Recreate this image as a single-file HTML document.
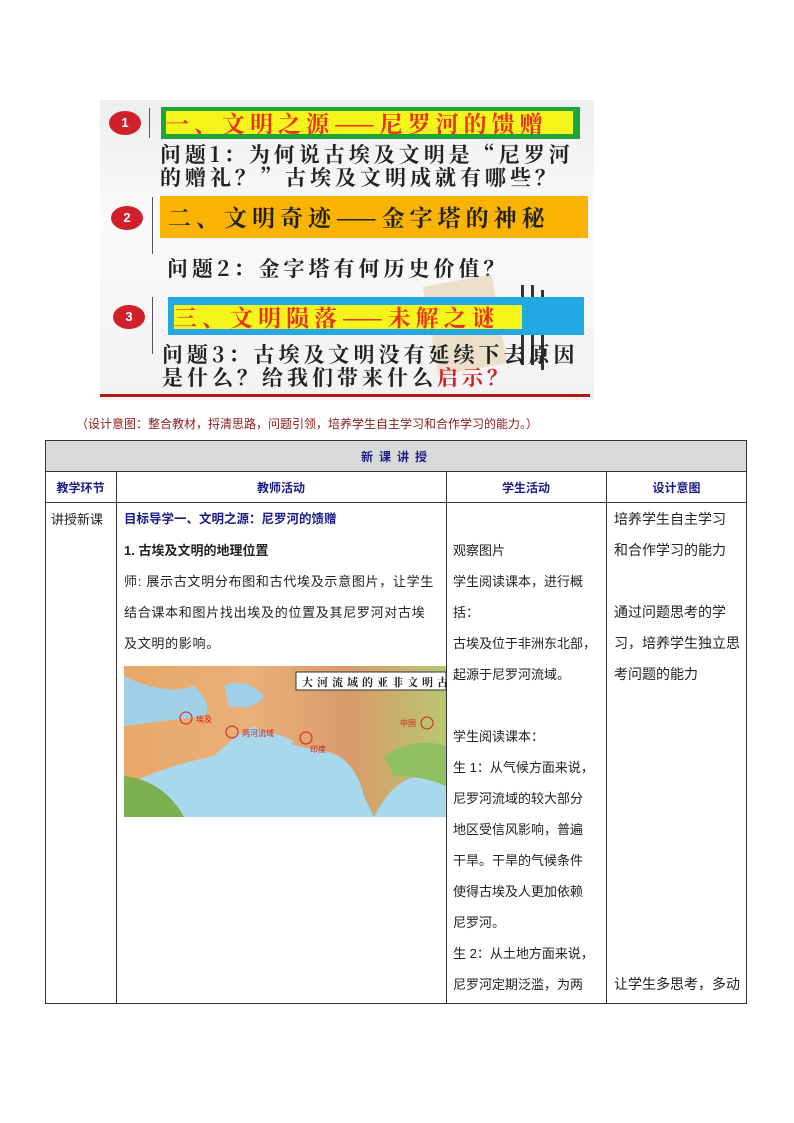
<!DOCTYPE html>
<html><head><meta charset="utf-8"><style>
body{margin:0;background:#fff;width:794px;height:1123px;position:relative;overflow:hidden;font-family:"Liberation Sans","Noto Sans CJK SC",sans-serif;}
.a{position:absolute;white-space:nowrap;}
.slide{position:absolute;left:100px;top:100px;width:494px;height:300px;background:linear-gradient(#eceef0,#fafafa 40%,#f2f2f2);overflow:hidden;font-family:"Noto Serif CJK SC","Noto Sans CJK SC",serif;font-weight:bold;}
.dot{position:absolute;width:32px;height:24px;border-radius:50%;background:#d0202a;color:#fff;font-size:13px;text-align:center;line-height:24px;font-family:"Liberation Sans",sans-serif;}
.vl{position:absolute;width:1px;background:#555;}
.q{position:absolute;font-size:21px;letter-spacing:4px;color:#222;white-space:nowrap;line-height:23px;}
.h{font-size:23px;letter-spacing:5px;white-space:nowrap;overflow:hidden;position:absolute;}
.t{position:absolute;font-size:13px;line-height:31px;color:#222;}
.cell{position:absolute;border:1px solid #333;box-sizing:border-box;}
</style></head><body>
<div class="slide">
 <div class="dot" style="left:9px;top:11px">1</div>
 <div class="dot" style="left:11px;top:106px">2</div>
 <div class="dot" style="left:13px;top:205px">3</div>
 <div class="vl" style="left:49px;top:8px;height:30px"></div>
 <div class="vl" style="left:52px;top:97px;height:57px"></div>
 <div class="vl" style="left:52px;top:197px;height:57px"></div>
 <div style="position:absolute;left:61px;top:7px;width:419px;height:32px;background:#1fa33a"></div>
 <div class="h" style="left:66px;top:11px;width:407px;height:23px;background:#f5f51c;color:#e8321b;line-height:23px">一、文明之源——尼罗河的馈赠</div>
 <div class="q" style="left:60px;top:43px">问题1：为何说古埃及文明是“尼罗河<br>的赠礼？”古埃及文明成就有哪些？</div>
 <div class="h" style="left:60px;top:96px;width:428px;height:42px;background:#f9b300;color:#222;line-height:42px;padding-left:8px;box-sizing:border-box">二、文明奇迹——金字塔的神秘</div>
 <div class="q" style="left:67px;top:157px">问题2：金字塔有何历史价值？</div>
 <div style="position:absolute;left:330px;top:180px;width:70px;height:90px;background:#e8d6b6;transform:rotate(-10deg);opacity:.7"></div>
 <div style="position:absolute;left:421px;top:185px;width:3px;height:80px;background:#333"></div>
 <div style="position:absolute;left:431px;top:185px;width:3px;height:80px;background:#333"></div>
 <div style="position:absolute;left:441px;top:190px;width:3px;height:80px;background:#333"></div>
 <div style="position:absolute;left:68px;top:197px;width:416px;height:38px;background:#24a8e4"></div>
 <div class="h" style="left:74px;top:205px;width:348px;height:24px;background:#f5f51c;color:#e8321b;line-height:24px">三、文明陨落——未解之谜</div>
 <div class="q" style="left:62px;top:243px">问题3：古埃及文明没有延续下去原因<br>是什么？给我们带来什么<span style="color:#d0202a">启示？</span></div>
 <div style="position:absolute;left:0;top:294px;width:490px;height:3px;background:#b01818"></div>
</div>
<div class="a" style="left:76px;top:415px;font-size:12px;color:#8b1a1a">（设计意图：整合教材，捋清思路，问题引领，培养学生自主学习和合作学习的能力。）</div>

<div class="cell" style="left:45px;top:440px;width:702px;height:32px;background:#d9d9d9"></div>
<div class="a" style="left:0;width:794px;text-align:center;top:448px;font-size:12px;color:#1a1a8a;letter-spacing:6px;font-weight:bold">新课讲授</div>
<div class="cell" style="left:45px;top:471px;width:702px;height:533px"></div>
<div style="position:absolute;left:45px;top:502px;width:702px;height:1px;background:#333"></div>
<div style="position:absolute;left:116px;top:471px;width:1px;height:533px;background:#333"></div>
<div style="position:absolute;left:446px;top:471px;width:1px;height:533px;background:#333"></div>
<div style="position:absolute;left:606px;top:471px;width:1px;height:533px;background:#333"></div>
<div class="a" style="left:45px;width:71px;text-align:center;top:479px;font-size:12px;color:#1a1a8a;font-weight:bold">教学环节</div>
<div class="a" style="left:116px;width:330px;text-align:center;top:479px;font-size:12px;color:#1a1a8a;font-weight:bold">教师活动</div>
<div class="a" style="left:446px;width:160px;text-align:center;top:479px;font-size:12px;color:#1a1a8a;font-weight:bold">学生活动</div>
<div class="a" style="left:606px;width:141px;text-align:center;top:479px;font-size:12px;color:#1a1a8a;font-weight:bold">设计意图</div>

<div class="t" style="left:51px;top:504px">讲授新课</div>
<div class="t" style="left:124px;top:504px;width:325px;white-space:nowrap">
<div style="color:#1a1a8a;font-weight:bold;font-size:12.5px">目标导学一、文明之源：尼罗河的馈赠</div>
<div style="font-weight:bold;font-size:13px">1. 古埃及文明的地理位置</div>
<div style="font-size:13px;letter-spacing:0.7px">师: 展示古文明分布图和古代埃及示意图片，让学生<br>结合课本和图片找出埃及的位置及其尼罗河对古埃<br>及文明的影响。</div>
</div>
<svg style="position:absolute;left:124px;top:666px" width="322" height="151" viewBox="0 0 322 151">
<defs><linearGradient id="g" x1="0" y1="0" x2="1" y2="0"><stop offset="0" stop-color="#e8a868"/><stop offset=".4" stop-color="#e9b07a"/><stop offset=".7" stop-color="#d99a6a"/><stop offset="1" stop-color="#b8c870"/></linearGradient></defs>
<rect width="322" height="151" fill="url(#g)"/>
<path d="M0 10 Q40 30 70 20 Q90 40 80 50 L0 60Z" fill="#9fd0e8"/>
<path d="M100 20 Q120 10 140 30 Q130 45 105 40Z" fill="#9fd0e8"/>
<path d="M0 151 L0 120 Q40 100 90 90 Q110 70 130 60 Q160 80 200 85 Q230 90 240 130 L250 151Z" fill="#a8d8ec"/>
<path d="M110 70 Q140 60 170 75 L150 90 Q130 85 110 70Z" fill="#a8d8ec"/>
<path d="M250 151 Q270 110 300 110 L322 120 L322 151Z" fill="#a8d8ec"/>
<path d="M0 110 Q40 115 60 151 L0 151Z" fill="#7cb050"/>
<path d="M260 90 Q290 70 322 80 L322 120 Q300 110 270 110Z" fill="#90c060"/>
<circle cx="62" cy="52" r="6" fill="none" stroke="#d02020"/><text x="72" y="56" font-size="8" fill="#d02020">埃及</text>
<circle cx="108" cy="66" r="6" fill="none" stroke="#d02020"/><text x="118" y="70" font-size="8" fill="#d02020">两河流域</text>
<circle cx="182" cy="72" r="6" fill="none" stroke="#d02020"/><text x="186" y="86" font-size="8" fill="#d02020">印度</text>
<circle cx="303" cy="57" r="6" fill="none" stroke="#d02020"/><text x="276" y="60" font-size="8" fill="#d02020">中国</text>
<rect x="172" y="6" width="150" height="18" fill="#fff" stroke="#333"/>
<text x="178" y="20" font-size="11" font-weight="bold" font-family="Noto Serif CJK SC,serif" fill="#222" letter-spacing="4">大河流域的亚非文明古</text>
</svg>

<div class="t" style="left:453px;top:535px;font-size:13px">观察图片<br>学生阅读课本，进行概<br>括：<br>古埃及位于非洲东北部，<br>起源于尼罗河流域。<br><br>学生阅读课本：<br>生 1：从气候方面来说，<br>尼罗河流域的较大部分<br>地区受信风影响，普遍<br>干旱。干旱的气候条件<br>使得古埃及人更加依赖<br>尼罗河。<br>生 2：从土地方面来说，<br>尼罗河定期泛滥，为两</div>
<div class="t" style="left:614px;top:504px;font-size:14px">培养学生自主学习<br>和合作学习的能力<br><br>通过问题思考的学<br>习，培养学生独立思<br>考问题的能力</div>
<div class="t" style="left:614px;top:969px;font-size:14px">让学生多思考，多动</div>
</body></html>
